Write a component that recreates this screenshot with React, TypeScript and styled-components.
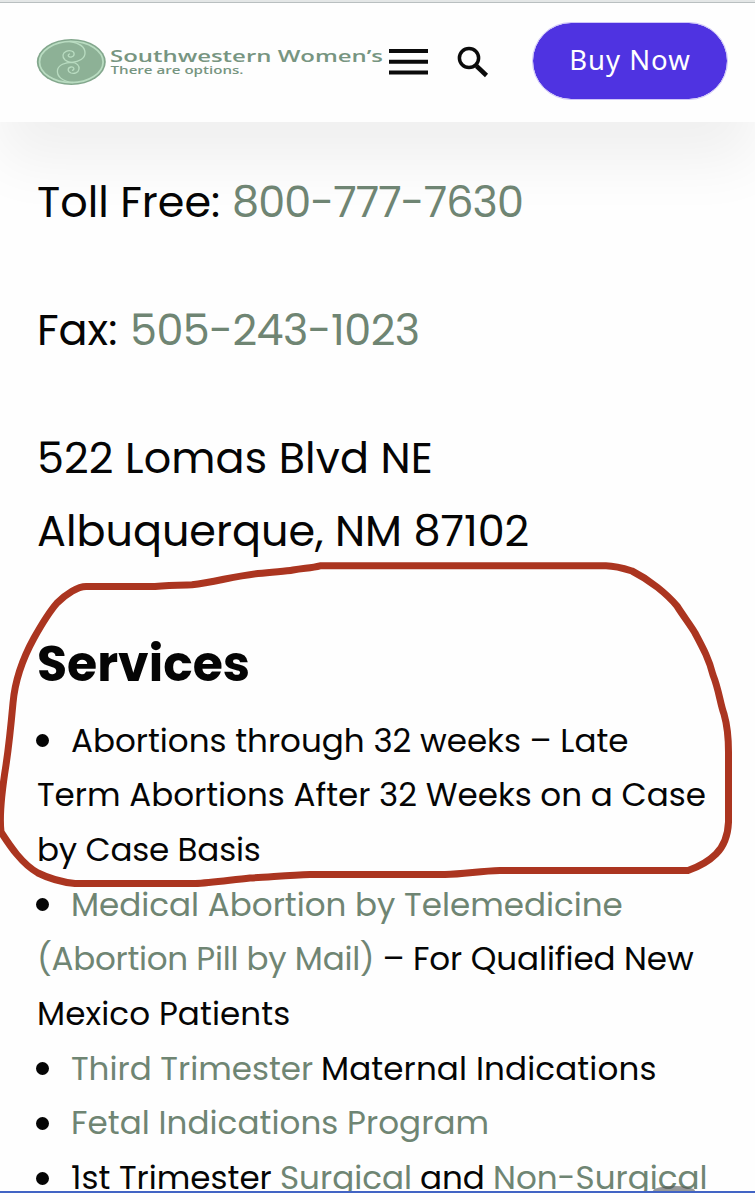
import React from "react";
import styled, { createGlobalStyle } from "styled-components";

const Global = createGlobalStyle`
  * { box-sizing: border-box; }
  body {
    margin: 0;
    background: #fefefe;
    color: #050505;
    font-family: Poppins, Inter, "Open Sans", sans-serif;
    overflow: hidden;
  }
`;

const Screen = styled.div`
  position: relative;
  width: 755px;
  height: 1200px;
  overflow: hidden;
  display: flex;
  flex-direction: column;
`;

const Header = styled.header`
  flex: none;
  height: 122px;
  padding: 0 27px 2px 36px;
  display: flex;
  align-items: center;
  border-top: 2px solid #e4e7e7;
  background: #fefefe;
  box-shadow: inset 0 1px 0 #b9bfc0, 0 40px 60px 0 rgba(0, 0, 0, 0.06);
`;

const Logo = styled.svg`
  display: block;
  width: 350px;
  height: 50px;
  margin-top: 2px;
`;

const IconButton = styled.button<{ $gap: number }>`
  display: flex;
  padding: 0;
  margin-top: 1px;
  margin-left: ${(p) => p.$gap}px;
  border: 0;
  background: none;
`;

const BuyButton = styled.button`
  width: 196px;
  height: 78px;
  margin-left: auto;
  padding: 0 0 3px;
  border: 1px solid #cfc6f8;
  border-radius: 39px;
  background: #4f33e1;
  background-clip: padding-box;
  color: #fff;
  font: 400 27.5px "Noto Sans", sans-serif;
  letter-spacing: 1px;
`;

const Content = styled.main`
  position: relative;
  flex: none;
  height: 1069px;
  padding: 43.6px 0 0 37px;
  overflow: hidden;
  white-space: nowrap;
`;

const Contact = styled.p<{ $after?: number }>`
  margin: 0 0 ${(p) => p.$after ?? 0}px;
  font-size: 42.9px;
  line-height: 73px;
`;

const Heading = styled.h2`
  margin: 66px 0 20px;
  font-size: 48.9px;
  font-weight: 700;
  line-height: 60px;
`;

const List = styled.ul`
  margin: 0;
  padding: 0;
  list-style: none;
  font-size: 32.6px;
  line-height: 54.7px;
`;

const Item = styled.li<{ $bullet?: boolean }>`
  height: 54.7px;
  &::before {
    content: "";
    display: ${(p) => (p.$bullet ? "inline-block" : "none")};
    width: 13px;
    height: 13px;
    margin: 0 22.5px 0 -1.5px;
    border-radius: 50%;
    background: #050505;
    vertical-align: 4.5px;
  }
`;

const Run = styled.span<{ $w?: number; $track?: number }>`
  display: inline-block;
  width: ${(p) => (p.$w ? `${p.$w}px` : "auto")};
  letter-spacing: ${(p) => p.$track ?? 0}px;
`;

const LinkRun = styled(Run)`
  color: #6f8573;
`;

const Marker = styled.svg`
  position: absolute;
  left: 0;
  top: 540px;
  width: 755px;
  height: 360px;
  pointer-events: none;
`;

const FloatingHandle = styled.div`
  position: absolute;
  left: 653px;
  top: 1186px;
  width: 42px;
  height: 5px;
  border-radius: 21px 21px 0 0 / 5px 5px 0 0;
  background: rgba(80, 84, 84, 0.6);
`;

const Footer = styled.div`
  flex: none;
  height: 9px;
  border-top: 2px solid #4163c4;
  background: #fdfdfe;
`;

export default function App() {
  return (
    <>
      <Global />
      <Screen>
        <Header>
          <Logo viewBox="36 37 350 50">
            <ellipse cx="71.3" cy="62" rx="34.5" ry="23" fill="#83a78d" />
            <ellipse cx="71.3" cy="62" rx="31.8" ry="20.6" fill="#8db196" stroke="#b9dcc1" strokeWidth="1.8" />
            <g fill="none" stroke="#b9dcc1" strokeWidth="1.3" strokeLinecap="round">
              <path d="M70 41.5C79 43 85 47 85 53C85 58.500 79 61.800 72 62.300C66 62.600 62.500 58.500 63 55C63.600 51.500 68 50 71.500 51C75 52 75 56 71.500 57C68.500 57.600 67 55 69.500 54" />
              <path d="M73 82.500C62 81.500 56.500 76 57.500 70C58.500 65 65 62.300 72 62.300C77 62.500 79.500 66 79 69C78.500 73 74 74 71 73C67 71.500 67.500 67.500 71 67C74 66.600 75 69.500 72.500 70.300" />
            </g>
            <g fill="#779581" fontFamily='"Open Sans", sans-serif' fontWeight="600">
              <text x="110" y="62" fontSize="17" textLength="273" lengthAdjust="spacingAndGlyphs">Southwestern Women’s</text>
              <text x="110.500" y="73.500" fontSize="11.500" textLength="133" lengthAdjust="spacingAndGlyphs">There are options.</text>
            </g>
          </Logo>
          <IconButton $gap={3} aria-label="Menu">
            <svg width="39" height="26" viewBox="0 0 39 26" fill="#0b0b0b">
              <path d="M0 0h39v4H0zM0 10.700h39v4H0zM0 21.400h39v4H0z" />
            </svg>
          </IconButton>
          <IconButton $gap={29} aria-label="Search">
            <svg width="32" height="32" viewBox="0 0 32 32" fill="none" stroke="#0b0b0b">
              <circle cx="12" cy="12" r="9.600" strokeWidth="3.500" />
              <path d="M19.500 20L29.500 29.500" strokeWidth="4.500" />
            </svg>
          </IconButton>
          <BuyButton>Buy Now</BuyButton>
        </Header>
        <Content>
          <Contact $after={55}>
            <Run $w={195}>Toll Free:</Run>
            <LinkRun $track={-0.85}>800-777-7630</LinkRun>
          </Contact>
          <Contact $after={55}>
            <Run $w={93}>Fax:</Run>
            <LinkRun $track={-0.5}>505-243-1023</LinkRun>
          </Contact>
          <Contact><Run $track={0.1}>522 Lomas Blvd NE</Run></Contact>
          <Contact><Run>Albuquerque, NM 87102</Run></Contact>
          <Heading><Run>Services</Run></Heading>
          <List>
            <Item $bullet><Run>Abortions through 32 weeks – Late</Run></Item>
            <Item><Run>Term Abortions After 32 Weeks on a Case</Run></Item>
            <Item><Run $track={-0.2}>by Case Basis</Run></Item>
            <Item $bullet><LinkRun>Medical Abortion by Telemedicine</LinkRun></Item>
            <Item><LinkRun $w={345.5} $track={-0.27}>(Abortion Pill by Mail)</LinkRun><Run $track={-0.1}>– For Qualified New</Run></Item>
            <Item><Run $track={0.1}>Mexico Patients</Run></Item>
            <Item $bullet><LinkRun $w={250}>Third Trimester</LinkRun><Run $track={0.12}>Maternal Indications</Run></Item>
            <Item $bullet><LinkRun $track={0.05}>Fetal Indications Program</LinkRun></Item>
            <Item $bullet>
              <Run $w={209}>1st Trimester</Run>
              <LinkRun $w={140}>Surgical</LinkRun>
              <Run $w={73}>and</Run>
              <LinkRun>Non-Surgical</LinkRun>
            </Item>
          </List>
        </Content>
        <Footer />
        <FloatingHandle />
        <Marker viewBox="0 540 755 360">
          <path
            d="M87 586.500H155C170 585 185 585 192 584.800C215 582 235 576 258 573.500C275 571.500 285 571.500 293 570C305 568 312 568 320 565.800H606C616 566 624 568.500 632 571C650 580 667 594 677 606C684 617 691 626 695 633C703 648 709 659 713 675C719 690 720 703 724 714C728 728 728.500 740 728.500 752V822C728 834 724 846 716 854C708 862 698 867 688 870.500H500C480 871 465 874 445 874.500H310C290 875 270 877 250 878C230 880 210 883 195 883.500H75C60 882 48 878 38 873C22 864 10 846 1 832C-1 815 2 790 6 765C9 745 11 725 13 703C15 680 23 658 34 638C43 622 50 611 57 603C66 594 78 586 87 586.500Z"
            fill="none"
            stroke="#ab3520"
            strokeWidth="7"
            strokeLinejoin="round"
          />
        </Marker>
      </Screen>
    </>
  );
}
